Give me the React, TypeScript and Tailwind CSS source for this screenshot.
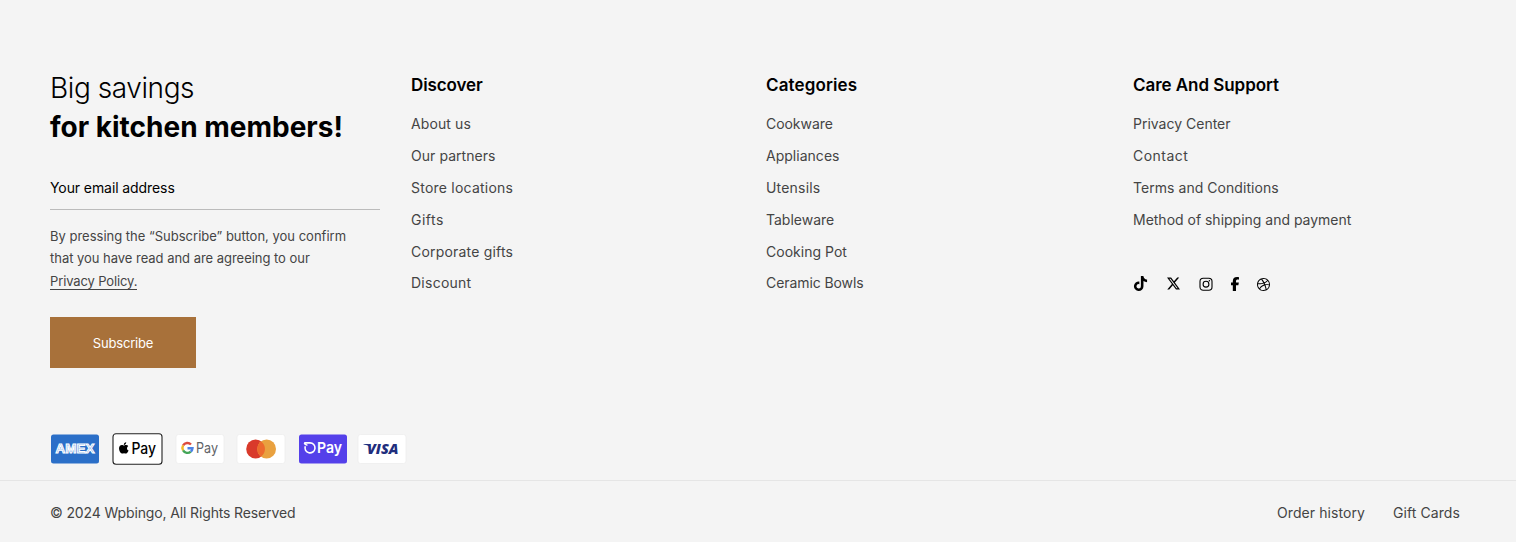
import type { ReactNode } from "react";
import { FaTiktok, FaFacebookF } from "react-icons/fa6";
import { BsDribbble, BsTwitterX } from "react-icons/bs";
import { FaApple } from "react-icons/fa";

type Item = [label: string, tracking: string];

const discover: Item[] = [
  ["About us", "tracking-[0.1px]"],
  ["Our partners", "tracking-[0.05px]"],
  ["Store locations", "tracking-[0.23px]"],
  ["Gifts", "tracking-[0.5px]"],
  ["Corporate gifts", "tracking-[0.19px]"],
  ["Discount", "tracking-[0.25px]"],
];
const categories: Item[] = [
  ["Cookware", "tracking-[-0.05px]"],
  ["Appliances", "tracking-[0.02px]"],
  ["Utensils", "tracking-[0.2px]"],
  ["Tableware", "tracking-[0px]"],
  ["Cooking Pot", "tracking-[0.02px]"],
  ["Ceramic Bowls", "tracking-[-0.08px]"],
];
const support: Item[] = [
  ["Privacy Center", "tracking-[0px]"],
  ["Contact", "tracking-[0.48px]"],
  ["Terms and Conditions", "tracking-[0.05px]"],
  ["Method of shipping and payment", "tracking-[-0.01px]"],
];

function Column({ title, tracking, items, children }: { title: string; tracking: string; items: Item[]; children?: ReactNode }) {
  return (
    <div className="pt-[73px]">
      <h3 className={`text-[17px] leading-6 font-semibold text-black ${tracking}`}>{title}</h3>
      <ul className="mt-[11px]">
        {items.map(([label, t]) => (
          <li key={label} className="h-[31.9px] text-[14px] leading-8 text-[#444]">
            <a href="#" className={t}>{label}</a>
          </li>
        ))}
      </ul>
      {children}
    </div>
  );
}

function Amex() {
  return (
    <svg width="50" height="32" viewBox="0 0 50 32">
      <rect x="1" y="1.5" width="48" height="29" rx="2.5" fill="#2b6fc8" />
      <text x="5.5" y="20" textLength="39" lengthAdjust="spacingAndGlyphs" fontFamily="Liberation Sans, sans-serif" fontWeight="700" fontSize="12" fill="#8db3e6" stroke="#fff" strokeWidth="0.9">AMEX</text>
    </svg>
  );
}

function ApplePay() {
  return (
    <svg width="51" height="32" viewBox="0 0 51 32">
      <rect x="1" y="0.7" width="49" height="30.6" rx="3" fill="#fff" stroke="#222" strokeWidth="1.1" />
      <FaApple x="5.3" y="8.4" size={13} color="#000" />
      <text x="19.4" y="21" textLength="24.6" lengthAdjust="spacingAndGlyphs" fontFamily="Inter, sans-serif" fontWeight="500" fontSize="15.5" fill="#000">Pay</text>
    </svg>
  );
}

function GooglePay() {
  return (
    <svg width="50" height="32" viewBox="0 0 50 32">
      <rect x="1" y="1.5" width="48" height="29" rx="2.5" fill="#fff" stroke="#eee" strokeWidth="0.8" />
      <g fill="none" strokeWidth="2.4">
        <path d="M8.1 12.4A5 5 0 0 1 16 11.5" stroke="#dc4b3e" />
        <path d="M8.1 17.4A5 5 0 0 1 8.1 12.4" stroke="#f1b928" />
        <path d="M15.8 18.6A5 5 0 0 1 8.1 17.4" stroke="#43a557" />
        <path d="M12.5 15.3H17.5Q17.4 17.3 15.8 18.6" stroke="#4d83e6" />
      </g>
      <text x="21" y="20" textLength="22" lengthAdjust="spacingAndGlyphs" fontFamily="Inter, sans-serif" fontSize="14.5" fill="#5f6368">Pay</text>
    </svg>
  );
}

function Mastercard() {
  return (
    <svg width="50" height="32" viewBox="0 0 50 32">
      <rect x="1" y="1.5" width="48" height="29" rx="2.5" fill="#fff" stroke="#eee" strokeWidth="0.8" />
      <circle cx="19.6" cy="16" r="9.4" fill="#d93a2b" />
      <circle cx="30.6" cy="16" r="9.4" fill="#e9a13f" />
      <path d="M25.1 8.4a9.4 9.4 0 0 1 0 15.2a9.4 9.4 0 0 1 0-15.2z" fill="#ed6a2d" />
    </svg>
  );
}

function ShopPay() {
  return (
    <svg width="50" height="32" viewBox="0 0 50 32">
      <rect x="1" y="1.5" width="48" height="29" rx="2.5" fill="#5440ea" />
      <path d="M6.2 9.9H12A5 5 0 1 1 7.3 13.2M6.4 9.9Q7 12.1 9.4 12.1" fill="none" stroke="#fff" strokeWidth="1.6" />
      <text x="19" y="20" textLength="25" lengthAdjust="spacingAndGlyphs" fontFamily="Inter, sans-serif" fontWeight="600" fontSize="15" fill="#fff">Pay</text>
    </svg>
  );
}

function Visa() {
  return (
    <svg width="50" height="32" viewBox="0 0 50 32">
      <rect x="1" y="1.5" width="48" height="29" rx="2.5" fill="#fff" stroke="#eee" strokeWidth="0.8" />
      <path d="M6.5 11H11.5L13 14Q10.5 11.8 6.5 11.4z" fill="#1f2e7d" />
      <text x="10" y="21" textLength="31.5" lengthAdjust="spacingAndGlyphs" fontFamily="Open Sans, sans-serif" fontWeight="800" fontStyle="italic" fontSize="14.5" fill="#1f2e7d">VISA</text>
    </svg>
  );
}

function Instagram() {
  return (
    <svg className="ml-[19px] size-[14px]" viewBox="0 0 14 14" fill="none" stroke="currentColor">
      <rect x="1" y="1.2" width="12" height="12" rx="3.2" strokeWidth="1.1" />
      <circle cx="7" cy="7.2" r="2.9" strokeWidth="1.1" />
      <circle cx="10.4" cy="3.8" r="0.7" fill="currentColor" stroke="none" />
    </svg>
  );
}

export default function App() {
  return (
    <footer className="h-[542px] w-[1516px] overflow-hidden bg-[#f4f4f4] font-[Inter,sans-serif]">
      <div className="grid h-[433px] grid-cols-[361px_355px_367px_1fr] pl-[50px]">
        <div className="pt-[69px]">
          <h2 className="text-[28px] leading-[39px] text-black">
            <span className="block font-light tracking-[-0.42px]">Big savings</span>
            <span className="block font-bold tracking-[0px]">for kitchen members!</span>
          </h2>
          <div className="mt-[20px] h-[43px] w-[330px] border-b border-[#bbb] text-[14px] leading-[42px] text-black">
            <span className="tracking-[-0.09px]">Your email address</span>
          </div>
          <p className="mt-[15px] text-[13px] leading-[22.4px] whitespace-nowrap text-[#444]">
            <span className="block tracking-[0px]">By pressing the “Subscribe” button, you confirm</span>
            <span className="block tracking-[-0.03px]">that you have read and are agreeing to our</span>
            <a href="#" className="inline-block h-[17px] border-b border-[#444] leading-[17px] tracking-[-0.13px]">Privacy Policy.</a>
          </p>
          <button className="mt-[25px] block h-[51px] w-[146px] bg-[#a8713a] pt-[2px] text-[13px] tracking-[-0.2px] text-white">Subscribe</button>
        </div>
        <Column title="Discover" tracking="tracking-[-0.12px]" items={discover} />
        <Column title="Categories" tracking="tracking-[0.12px]" items={categories} />
        <Column title="Care And Support" tracking="tracking-[-0.05px]" items={support}>
          <div className="mt-[40px] flex h-[17px] items-center text-black">
            <FaTiktok className="-mt-[2px] size-[15px]" />
            <BsTwitterX className="-mt-px ml-[19px] size-[13px]" />
            <Instagram />
            <FaFacebookF className="-mt-px ml-[15px] size-[14px]" />
            <BsDribbble className="ml-[15px] size-[13px]" />
          </div>
        </Column>
      </div>
      <div className="flex h-[47px] items-start pl-[50px]">
        <Amex />
        <div className="ml-[12px]"><ApplePay /></div>
        <div className="ml-[12px]"><GooglePay /></div>
        <div className="ml-[11px]"><Mastercard /></div>
        <div className="ml-[12px]"><ShopPay /></div>
        <div className="ml-[9px]"><Visa /></div>
      </div>
      <div className="flex h-[62px] items-center border-t border-[#e5e5e5] pt-[2px] pr-[56px] pl-[50px] text-[14px] text-[#444]">
        <span className="tracking-[-0.14px]">© 2024 Wpbingo, All Rights Reserved</span>
        <a href="#" className="ml-auto tracking-[0.08px]">Order history</a>
        <a href="#" className="ml-[28px] tracking-[0.08px]">Gift Cards</a>
      </div>
    </footer>
  );
}
